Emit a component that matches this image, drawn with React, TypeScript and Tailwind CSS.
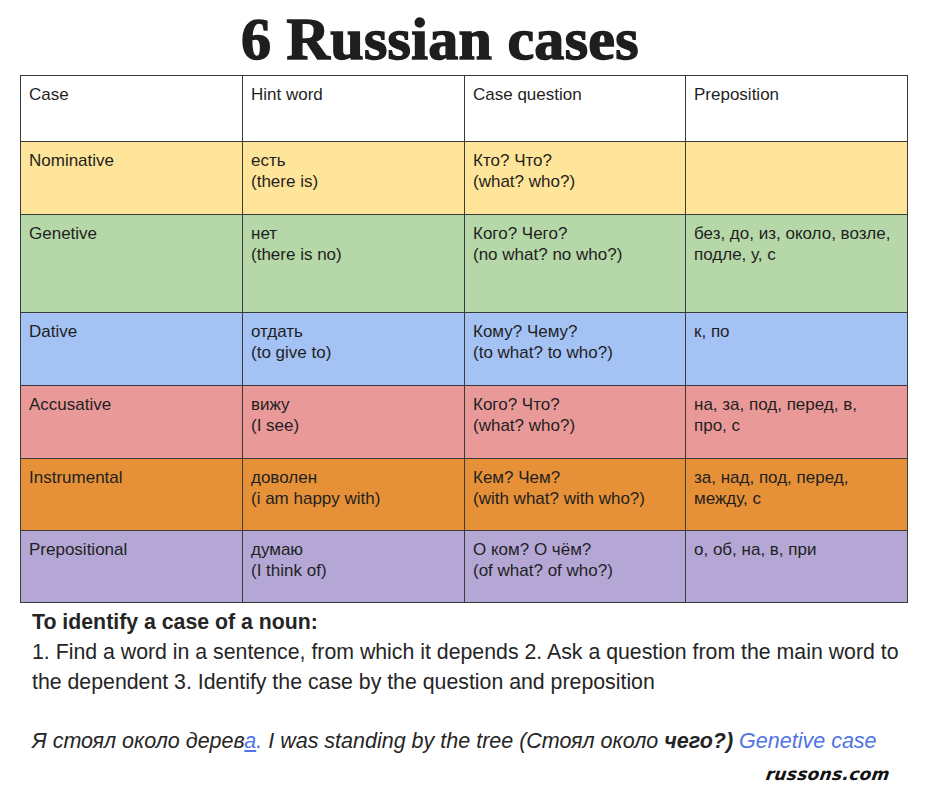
import React from 'react';

const rows = [
  { bg: 'bg-[#ffe599]', h: 'h-[73px]', cells: ['Nominative', 'есть\n(there is)', 'Кто? Что?\n(what? who?)', ''] },
  { bg: 'bg-[#b6d7a8]', h: 'h-[98px]', cells: ['Genetive', 'нет\n(there is no)', 'Кого? Чего?\n(no what? no who?)', 'без, до, из, около, возле,\nподле, у, с'] },
  { bg: 'bg-[#a4c2f4]', h: 'h-[73px]', cells: ['Dative', 'отдать\n(to give to)', 'Кому? Чему?\n(to what? to who?)', 'к, по'] },
  { bg: 'bg-[#ea9999]', h: 'h-[73px]', cells: ['Accusative', 'вижу\n(I see)', 'Кого? Что?\n(what? who?)', 'на, за, под, перед, в,\nпро, с'] },
  { bg: 'bg-[#e69138]', h: 'h-[72px]', cells: ['Instrumental', 'доволен\n(i am happy with)', 'Кем? Чем?\n(with what? with who?)', 'за, над, под, перед,\nмежду, с'] },
  { bg: 'bg-[#b4a7d6]', h: 'h-[72px]', cells: ['Prepositional', 'думаю\n(I think of)', 'О ком? О чём?\n(of what? of who?)', 'о, об, на, в, при'] },
];

const header = ['Case', 'Hint word', 'Case question', 'Preposition'];

const Cell = ({ text, last }: { text: string; last?: boolean }) => (
  <div className={`whitespace-pre-line px-2 pt-[8px] leading-[21px] ${last ? '' : 'border-r border-[#3a3a3a]'}`}>
    {text}
  </div>
);

export default function App() {
  return (
    <div className="w-[940px] h-[788px] bg-white text-[#1f1f1f] font-['Liberation_Sans',Arial,sans-serif] overflow-hidden">
      <h1 className="pl-[241px] pt-[8px] h-[75px] font-['Liberation_Serif','DejaVu_Serif',serif] font-bold text-[60px] leading-[62px] tracking-[0.3px] text-[#1e1e1e] [-webkit-text-stroke:1.5px_#1e1e1e]">
        6 Russian cases
      </h1>

      <div className="ml-[20px] w-[888px] border border-[#3a3a3a] text-[17px]">
        <div className="grid grid-cols-[222px_222px_221px_1fr] h-[65px] bg-white">
          {header.map((t, i) => (
            <Cell key={t} text={t} last={i === 3} />
          ))}
        </div>
        {rows.map((r) => (
          <div key={r.cells[0]} className={`grid grid-cols-[222px_222px_221px_1fr] border-t border-[#3a3a3a] ${r.bg} ${r.h}`}>
            {r.cells.map((t, i) => (
              <Cell key={i} text={t} last={i === 3} />
            ))}
          </div>
        ))}
      </div>

      <div className="pl-[32px] pt-[4px] text-[21.3px] leading-[30px] text-[#252525]">
        <p className="font-bold">To identify a case of a noun:</p>
        <p className="pr-[20px]">
          1. Find a word in a sentence, from which it depends 2. Ask a question from the main word to the dependent 3. Identify the case by the question and preposition
        </p>
        <p className="mt-[29px] italic text-[21.5px]">
          Я стоял около дерев
          <span className="text-[#4f74e3] underline">а</span>
          <span className="text-[#4f74e3]">.</span> I was standing by the tree (Стоял около <span className="font-bold">чего?)</span>{' '}
          <span className="text-[#4f74e3]">Genetive case</span>
        </p>
        <div className="flex justify-end pr-[50px] mt-[3px]">
          <span className="font-['DejaVu_Sans',sans-serif] italic font-bold text-[17px] tracking-[0.3px] text-[#111] [transform:skewX(-8deg)]">russons.com</span>
        </div>
      </div>
    </div>
  );
}
